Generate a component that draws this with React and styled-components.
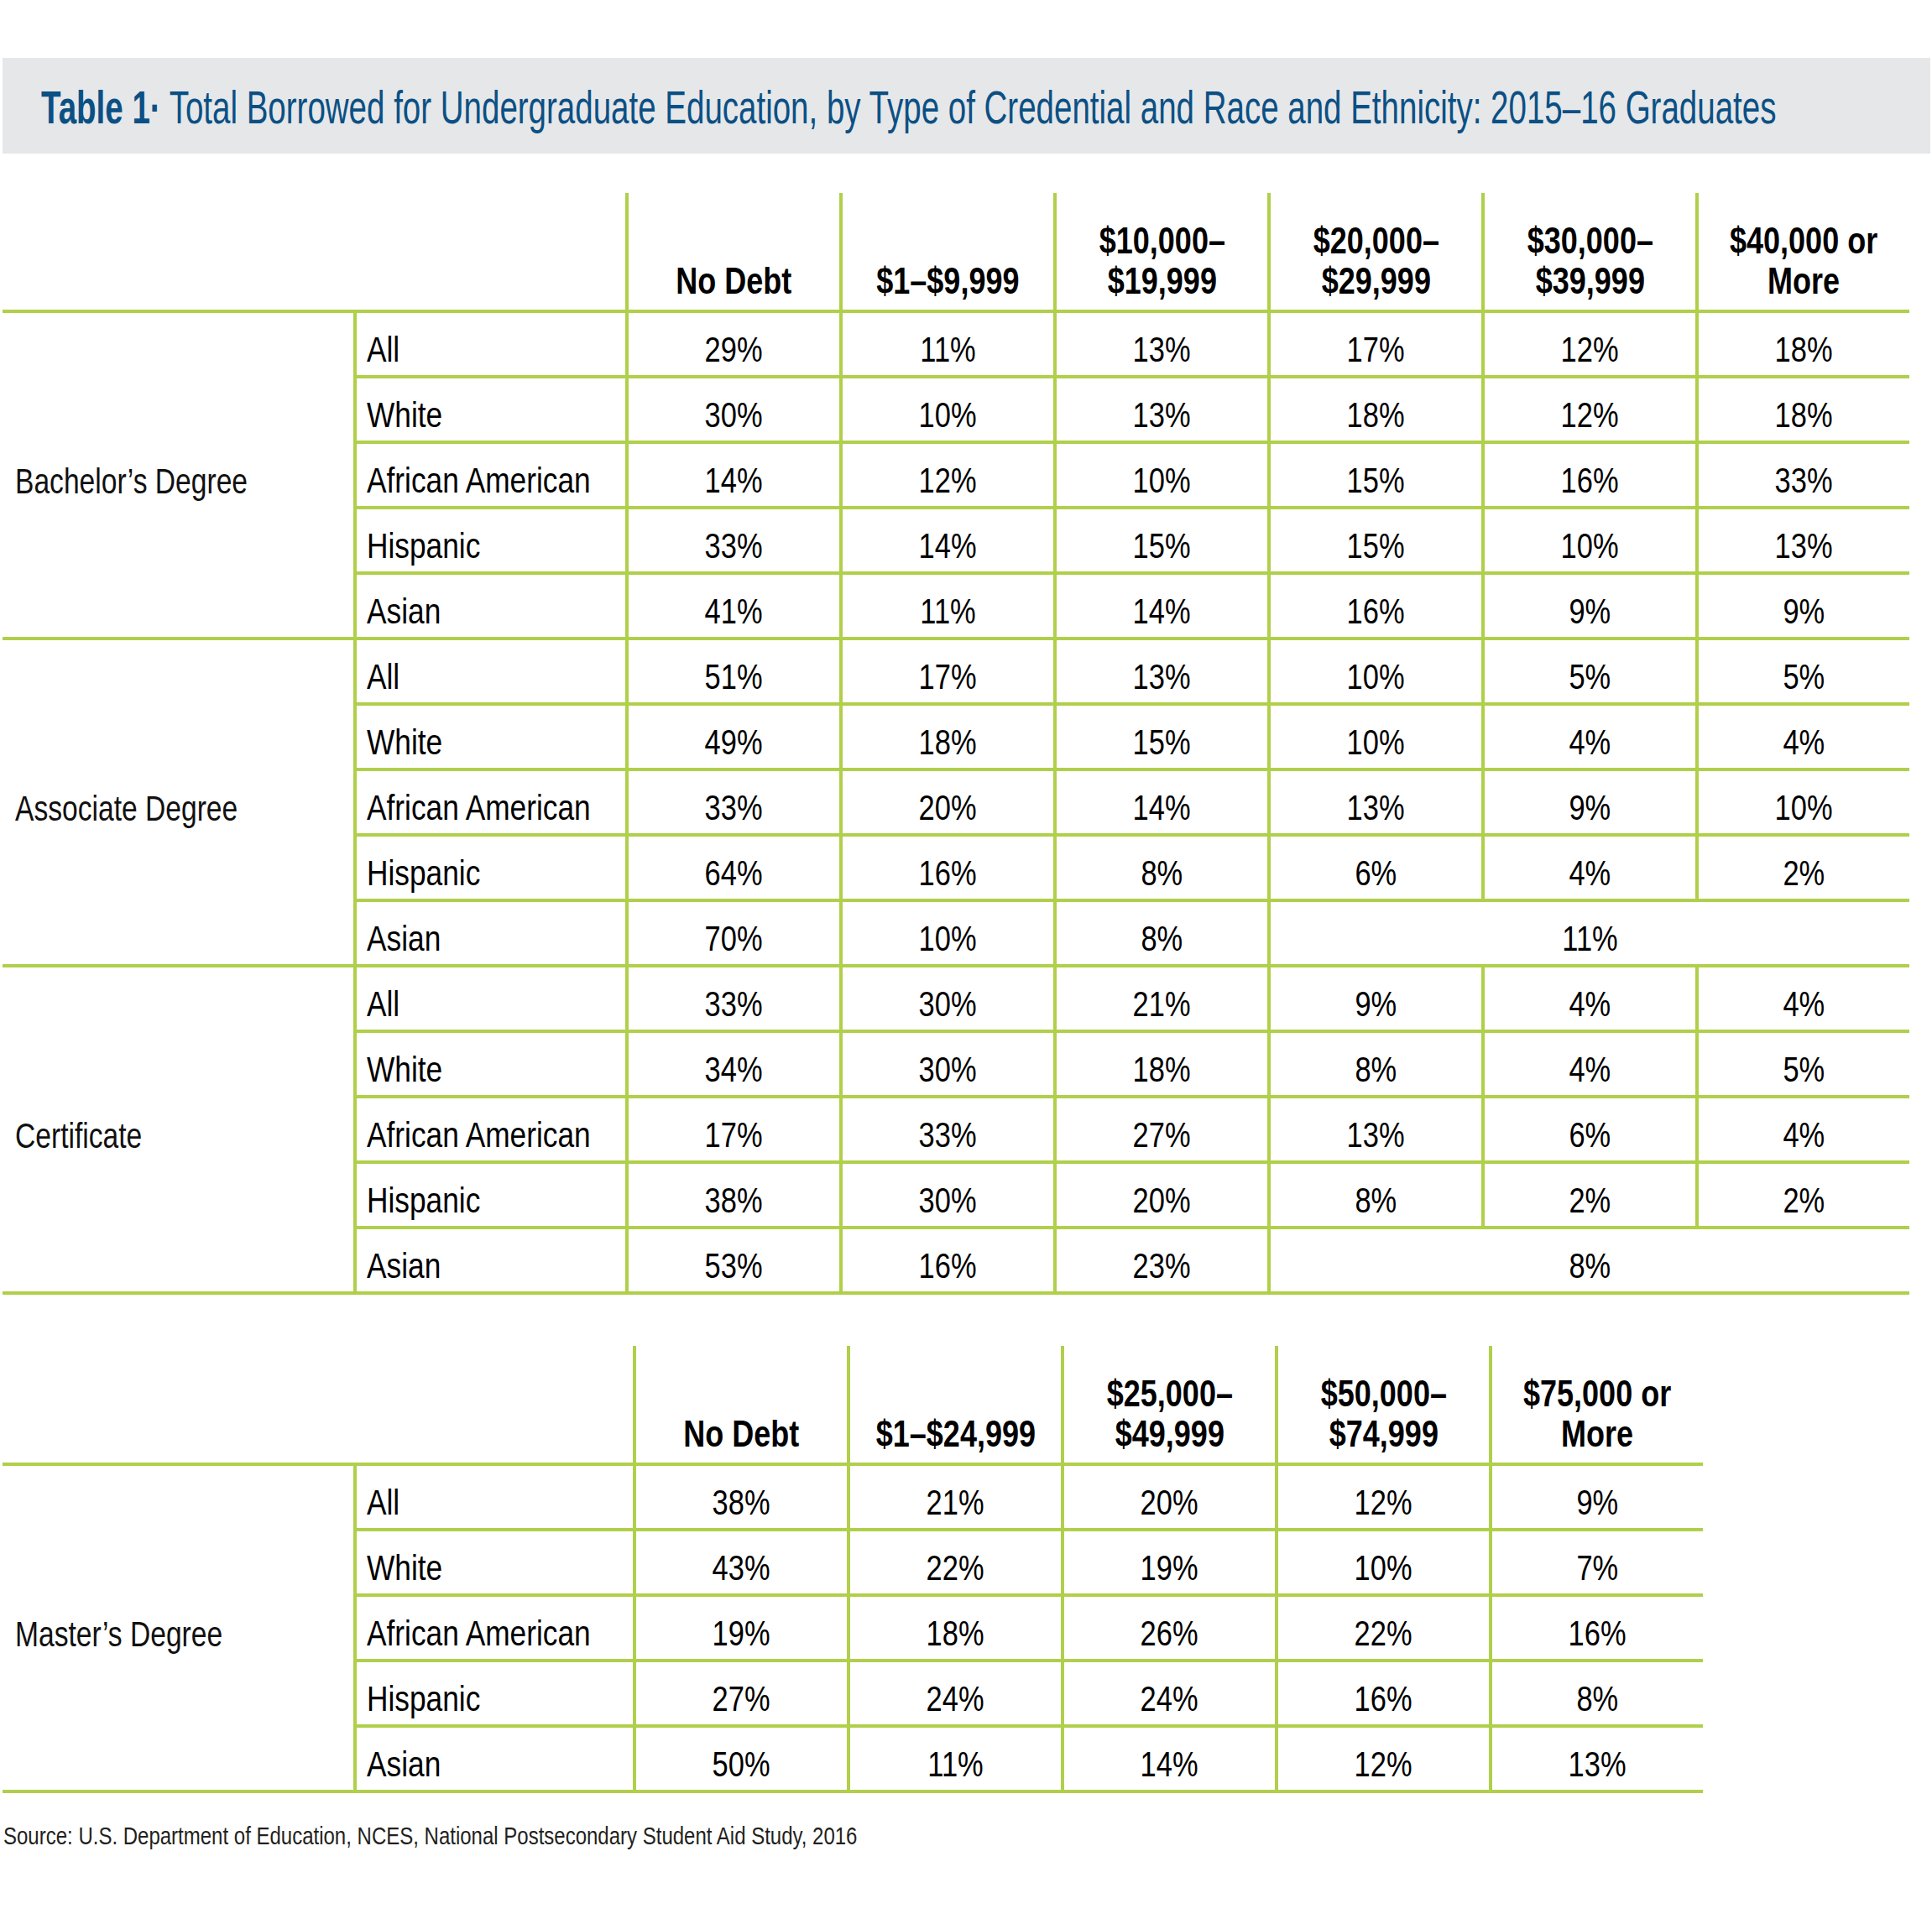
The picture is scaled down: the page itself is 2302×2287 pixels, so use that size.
import React from 'react'
import styled, { createGlobalStyle } from 'styled-components'

const GlobalStyle = createGlobalStyle`
    body {
        margin: 0;
        background: #fff;
        font-family: "Liberation Sans", Arial, sans-serif;
        color: #111;
    }
`

const green = '#b0cf4a'

const Page = styled.div`
    width: 2302px;
    padding-top: 69px;
    padding-bottom: 60px;
    overflow: hidden;
`

// the source uses a very condensed face; squeeze Liberation Sans to match
const Squeeze = styled.span`
    display: inline-block;
    white-space: pre;
    transform: scaleX(${(p) => p.$x || 0.82});
    transform-origin: ${(p) => p.$origin || 'center'} center;
`

const TitleBar = styled.div`
    box-sizing: border-box;
    margin: 0 2px 0 3px;
    height: 114px;
    background: #e6e7e8;
    display: flex;
    align-items: center;
    padding: 4px 0 0 46px;
    color: #0b5085;
    font-size: 55px;
    white-space: nowrap;
    overflow: hidden;
`

const TitleLead = styled.b`
    font-weight: 700;
`

const Table = styled.table`
    border-collapse: separate;
    border-spacing: 0;
    table-layout: fixed;
    width: ${(p) => p.$width}px;
    margin: ${(p) => p.$top}px 0 0 3px;
`

const HeadCell = styled.th`
    height: ${(p) => p.$height}px;
    padding: 0 0 10px;
    vertical-align: bottom;
    text-align: center;
    font-size: 45px;
    line-height: 48px;
    font-weight: 700;
    color: #000;
    border-bottom: 4px solid ${green};
    border-left: ${(p) => (p.$blank ? 'none' : `4px solid ${green}`)};
    white-space: nowrap;
`

const GroupCell = styled.td`
    padding: 16px 0 0 15px;
    vertical-align: middle;
    font-size: 42px;
    line-height: 1;
    border-bottom: 4px solid ${green};
    white-space: nowrap;
`

const LabelCell = styled.td`
    height: 65px;
    padding: 0 0 9px 12px;
    vertical-align: bottom;
    font-size: 42px;
    line-height: 1;
    color: #000;
    border-left: 4px solid ${green};
    border-bottom: 4px solid ${green};
    white-space: nowrap;
`

const ValueCell = styled(LabelCell)`
    padding-left: 0;
    text-align: center;
`

const Source = styled.p`
    margin: 33px 0 0 4px;
    font-size: 30px;
    line-height: 1.2;
    color: #231f20;
    white-space: nowrap;
`

const undergrad = [
    {
        name: 'Bachelor’s Degree',
        rows: [
            ['All', 29, 11, 13, 17, 12, 18],
            ['White', 30, 10, 13, 18, 12, 18],
            ['African American', 14, 12, 10, 15, 16, 33],
            ['Hispanic', 33, 14, 15, 15, 10, 13],
            ['Asian', 41, 11, 14, 16, 9, 9],
        ],
    },
    {
        name: 'Associate Degree',
        rows: [
            ['All', 51, 17, 13, 10, 5, 5],
            ['White', 49, 18, 15, 10, 4, 4],
            ['African American', 33, 20, 14, 13, 9, 10],
            ['Hispanic', 64, 16, 8, 6, 4, 2],
            ['Asian', 70, 10, 8, [11, 3]],
        ],
    },
    {
        name: 'Certificate',
        rows: [
            ['All', 33, 30, 21, 9, 4, 4],
            ['White', 34, 30, 18, 8, 4, 5],
            ['African American', 17, 33, 27, 13, 6, 4],
            ['Hispanic', 38, 30, 20, 8, 2, 2],
            ['Asian', 53, 16, 23, [8, 3]],
        ],
    },
]

const graduate = [
    {
        name: 'Master’s Degree',
        rows: [
            ['All', 38, 21, 20, 12, 9],
            ['White', 43, 22, 19, 10, 7],
            ['African American', 19, 18, 26, 22, 16],
            ['Hispanic', 27, 24, 24, 16, 8],
            ['Asian', 50, 11, 14, 12, 13],
        ],
    },
]

const undergradHeads = ['No Debt', '$1–$9,999', '$10,000–\n$19,999', '$20,000–\n$29,999', '$30,000–\n$39,999', '$40,000 or\nMore']
const gradHeads = ['No Debt', '$1–$24,999', '$25,000–\n$49,999', '$50,000–\n$74,999', '$75,000 or\nMore']

const DebtTable = ({ heads, groups, cols, top, headHeight }) => {
    const width = cols.reduce((a, b) => a + b, 0)
    return (
        <Table $width={width} $top={top}>
            <colgroup>
                {cols.map((w, i) => <col key={i} style={{ width: w }} />)}
            </colgroup>
            <thead>
                <tr>
                    <HeadCell colSpan={2} $blank $height={headHeight} />
                    {heads.map((h) => (
                        <HeadCell key={h} $height={headHeight}>
                            <Squeeze $x={0.8}>{h}</Squeeze>
                        </HeadCell>
                    ))}
                </tr>
            </thead>
            <tbody>
                {groups.map((g) => g.rows.map(([label, ...vals], i) => (
                    <tr key={g.name + label}>
                        {i === 0 && (
                            <GroupCell rowSpan={g.rows.length}>
                                <Squeeze $x={0.8} $origin="left">{g.name}</Squeeze>
                            </GroupCell>
                        )}
                        <LabelCell>
                            <Squeeze $x={0.84} $origin="left">{label}</Squeeze>
                        </LabelCell>
                        {vals.map((v, j) => Array.isArray(v)
                            ? <ValueCell key={j} colSpan={v[1]}><Squeeze>{v[0]}%</Squeeze></ValueCell>
                            : <ValueCell key={j}><Squeeze>{v}%</Squeeze></ValueCell>)}
                    </tr>
                )))}
            </tbody>
        </Table>
    )
}

const App = () => {
    return (
        <Page>
            <GlobalStyle />
            <TitleBar>
                <Squeeze $x={0.7} $origin="left">
                    <TitleLead>Table 1·</TitleLead> Total Borrowed for Undergraduate Education, by Type of Credential and Race and Ethnicity: 2015–16 Graduates
                </Squeeze>
            </TitleBar>
            <DebtTable
                heads={undergradHeads}
                groups={undergrad}
                cols={[418, 324, 255, 255, 255, 255, 255, 255]}
                top={47}
                headHeight={129}
            />
            <DebtTable
                heads={gradHeads}
                groups={graduate}
                cols={[418, 333, 255, 255, 255, 255, 255]}
                top={61}
                headHeight={129}
            />
            <Source>
                <Squeeze $x={0.8} $origin="left">Source: U.S. Department of Education, NCES, National Postsecondary Student Aid Study, 2016</Squeeze>
            </Source>
        </Page>
    )
}

export default App
